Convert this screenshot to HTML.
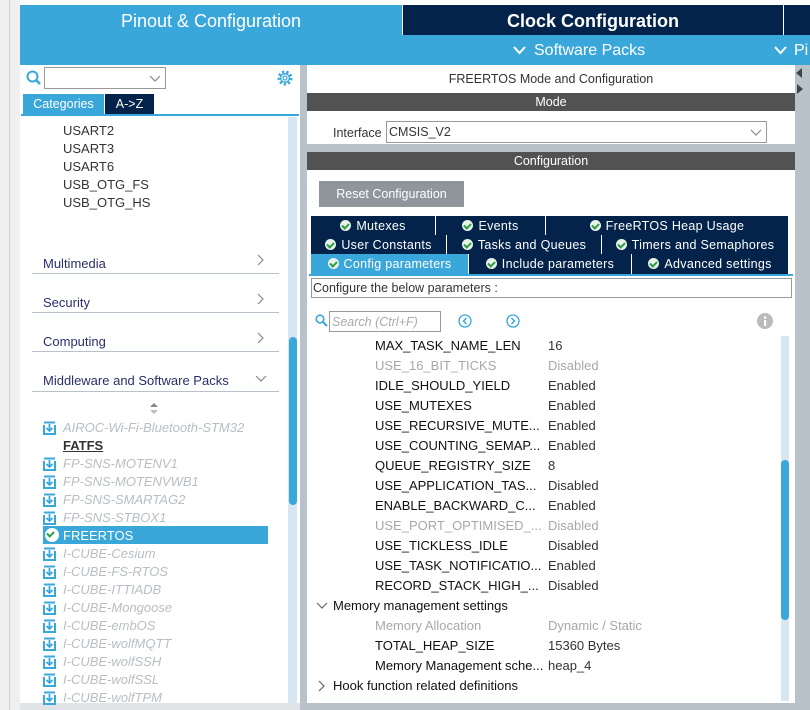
<!DOCTYPE html>
<html><head><meta charset="utf-8"><style>
*{margin:0;padding:0;box-sizing:border-box}
body{width:810px;height:710px;position:relative;overflow:hidden;background:#fff;font-family:"Liberation Sans",sans-serif;font-size:12px;color:#1a1a2e}
.a{position:absolute}
.ck{display:inline-block;width:11px;height:11px;border-radius:50%;background:#e8f3e8;position:relative;vertical-align:-1px;margin-right:5px}
.ck:after{content:"";position:absolute;left:3px;top:2px;width:3px;height:5px;border:solid #2f9a48;border-width:0 2px 2px 0;transform:rotate(45deg)}
.tab{position:absolute;height:19px;background:#03234b;color:#fff;text-align:center;line-height:20px;font-size:12.5px;border-right:1px solid #fff;letter-spacing:.3px}
.cat{position:absolute;left:43px;font-size:13px;color:#2b2f6b}
.sep{position:absolute;left:32px;width:247px;height:1px;background:#b8c2c8}
.pk{position:absolute;left:43px;font-size:13px;color:#b8bec4;font-style:italic;height:18px;line-height:19px;white-space:nowrap}
.pk svg{vertical-align:-3px;margin-right:7px}
.r{position:absolute;left:375px;font-size:13px;height:20px;line-height:21px;color:#111}
.v{position:absolute;left:548px;font-size:13px;height:20px;line-height:21px;color:#333}
.g{color:#a8a8a8}
</style></head><body>
<svg width="0" height="0" style="position:absolute"><defs><g id="dl"><path d="M1 4 V13 H12 V4" fill="none" stroke="#3aa7db" stroke-width="2"/><path d="M1 1.5 H12" stroke="#3aa7db" stroke-width="2"/><path d="M6.5 3 V10 M3.5 7 L6.5 10 L9.5 7" fill="none" stroke="#3aa7db" stroke-width="1.8"/></g><path id="rc" d="M1 1 L6 6 L1 11" fill="none" stroke="#888" stroke-width="1.2"/><path id="dc" d="M1 1 L6 6 L11 1" fill="none" stroke="#888" stroke-width="1.2"/></defs></svg>
<div class="a" style="left:0;top:0;width:20px;height:710px;background:#f0f0f0"></div>
<div class="a" style="left:9px;top:0;width:1px;height:710px;background:#d0d0d0"></div>
<div class="a" style="left:20px;top:5px;width:790px;height:60px;background:#3aa7db"></div>
<div class="a" style="left:20px;top:5px;width:382px;height:30px;color:#fff;font-size:18px;text-align:center;line-height:33px">Pinout &amp; Configuration</div>
<div class="a" style="left:403px;top:5px;width:380px;height:30px;background:#03234b;color:#fff;font-size:18px;text-align:center;line-height:33px;font-weight:bold">Clock Configuration</div>
<div class="a" style="left:784px;top:5px;width:26px;height:30px;background:#03234b"></div>
<div class="a" style="left:402px;top:5px;width:1px;height:30px;background:#fff"></div>
<div class="a" style="left:783px;top:5px;width:1px;height:30px;background:#fff"></div>
<svg class="a" style="left:513px;top:46px" width="13" height="9"><path d="M1 1 L6.5 7 L12 1" fill="none" stroke="#fff" stroke-width="2"/></svg>
<div class="a" style="left:534px;top:42px;color:#fff;font-size:16px">Software Packs</div>
<svg class="a" style="left:774px;top:46px" width="13" height="9"><path d="M1 1 L6.5 7 L12 1" fill="none" stroke="#fff" stroke-width="2"/></svg>
<div class="a" style="left:794px;top:42px;color:#fff;font-size:16px">Pi</div>
<svg class="a" style="left:26px;top:70px" width="16" height="16"><circle cx="6.5" cy="6.5" r="5" fill="none" stroke="#3aa7db" stroke-width="2"/><line x1="10" y1="10" x2="14" y2="14" stroke="#3aa7db" stroke-width="2.5"/></svg>
<div class="a" style="left:44px;top:67px;width:122px;height:22px;border:1px solid #999"></div>
<svg class="a" style="left:149px;top:75px" width="12" height="7"><use href="#dc"/></svg>
<svg class="a" style="left:276px;top:69px" width="18" height="18"><circle cx="9" cy="9" r="6" fill="none" stroke="#3aa7db" stroke-width="3" stroke-dasharray="2.2 2"/><circle cx="9" cy="9" r="4.3" fill="none" stroke="#3aa7db" stroke-width="1.3"/><circle cx="9" cy="9" r="2" fill="none" stroke="#3aa7db" stroke-width="1.2"/></svg>
<div class="a" style="left:23px;top:94px;width:81px;height:20px;background:#3aa7db;color:#fff;font-size:12.5px;text-align:center;line-height:21px">Categories</div>
<div class="a" style="left:105px;top:94px;width:49px;height:20px;background:#03234b;color:#fff;font-size:12.5px;text-align:center;line-height:21px">A-&gt;Z</div>
<div class="a" style="left:21px;top:114px;width:278px;height:2px;background:#3aa7db"></div>
<div class="a" style="left:288px;top:117px;width:9px;height:586px;background:#d6e6f3"></div>
<div class="a" style="left:289px;top:337px;width:8px;height:168px;background:#3aa7db;border-radius:4px"></div>
<div class="a" style="left:300px;top:65px;width:7px;height:645px;background:#b8c2c8"></div>
<div class="a" style="left:20px;top:703px;width:280px;height:7px;background:#e0e4e7"></div>
<div class="a" style="left:63px;top:122px;font-size:13px;color:#333;line-height:18px">USART2<br>USART3<br>USART6<br>USB_OTG_FS<br>USB_OTG_HS</div>
<div class="cat" style="top:256px">Multimedia</div><svg class="a" style="left:257px;top:254px" width="8" height="13"><use href="#rc"/></svg><div class="sep" style="top:273px"></div>
<div class="cat" style="top:295px">Security</div><svg class="a" style="left:257px;top:293px" width="8" height="13"><use href="#rc"/></svg><div class="sep" style="top:312px"></div>
<div class="cat" style="top:334px">Computing</div><svg class="a" style="left:257px;top:332px" width="8" height="13"><use href="#rc"/></svg><div class="sep" style="top:351px"></div>
<div class="cat" style="top:373px">Middleware and Software Packs</div><svg class="a" style="left:255px;top:375px" width="12" height="8"><use href="#dc"/></svg><div class="sep" style="top:391px"></div>
<svg class="a" style="left:150px;top:403px" width="8" height="12"><path d="M4 0 L8 4 H0 Z" fill="#888"/><path d="M0 7 H8 L4 11 Z" fill="#bbb"/></svg>
<div class="pk" style="top:418px"><svg width="13" height="14"><use href="#dl"/></svg>AIROC-Wi-Fi-Bluetooth-STM32</div>
<div class="a" style="left:63px;top:437px;font-size:13px;font-weight:bold;color:#333;text-decoration:underline;line-height:18px">FATFS</div>
<div class="pk" style="top:454px"><svg width="13" height="14"><use href="#dl"/></svg>FP-SNS-MOTENV1</div>
<div class="pk" style="top:472px"><svg width="13" height="14"><use href="#dl"/></svg>FP-SNS-MOTENVWB1</div>
<div class="pk" style="top:490px"><svg width="13" height="14"><use href="#dl"/></svg>FP-SNS-SMARTAG2</div>
<div class="pk" style="top:508px"><svg width="13" height="14"><use href="#dl"/></svg>FP-SNS-STBOX1</div>
<div class="a" style="left:43px;top:526px;width:225px;height:18px;background:#3aa7db;color:#fff;font-size:13px;line-height:19px;padding-left:2px"><span class="ck" style="width:14px;height:14px;background:#fff;margin-right:4px;vertical-align:-2px"></span>FREERTOS</div>
<div class="pk" style="top:544px"><svg width="13" height="14"><use href="#dl"/></svg>I-CUBE-Cesium</div>
<div class="pk" style="top:562px"><svg width="13" height="14"><use href="#dl"/></svg>I-CUBE-FS-RTOS</div>
<div class="pk" style="top:580px"><svg width="13" height="14"><use href="#dl"/></svg>I-CUBE-ITTIADB</div>
<div class="pk" style="top:598px"><svg width="13" height="14"><use href="#dl"/></svg>I-CUBE-Mongoose</div>
<div class="pk" style="top:616px"><svg width="13" height="14"><use href="#dl"/></svg>I-CUBE-embOS</div>
<div class="pk" style="top:634px"><svg width="13" height="14"><use href="#dl"/></svg>I-CUBE-wolfMQTT</div>
<div class="pk" style="top:652px"><svg width="13" height="14"><use href="#dl"/></svg>I-CUBE-wolfSSH</div>
<div class="pk" style="top:670px"><svg width="13" height="14"><use href="#dl"/></svg>I-CUBE-wolfSSL</div>
<div class="pk" style="top:688px"><svg width="13" height="14"><use href="#dl"/></svg>I-CUBE-wolfTPM</div>
<div class="a" style="left:795px;top:65px;width:15px;height:645px;background:#b8c2c8"></div>
<div class="a" style="left:307px;top:703px;width:488px;height:7px;background:#b8c2c8"></div>
<div class="a" style="left:307px;top:72px;width:488px;text-align:center;font-size:12.5px;color:#333">FREERTOS Mode and Configuration</div>
<div class="a" style="left:307px;top:93px;width:488px;height:18px;background:#525252;color:#fff;text-align:center;line-height:19px;font-size:12.5px">Mode</div>
<div class="a" style="left:333px;top:126px;font-size:12.5px;color:#333">Interface</div>
<div class="a" style="left:386px;top:121px;width:381px;height:22px;border:1px solid #999;font-size:12.5px;line-height:21px;padding-left:2px;color:#333">CMSIS_V2</div>
<svg class="a" style="left:750px;top:129px" width="12" height="7"><use href="#dc"/></svg>
<div class="a" style="left:307px;top:144px;width:488px;height:8px;background:#b8c2c8"></div>
<div class="a" style="left:307px;top:152px;width:488px;height:18px;background:#525252;color:#fff;text-align:center;line-height:19px;font-size:12.5px">Configuration</div>
<div class="a" style="left:319px;top:181px;width:145px;height:26px;background:#8e959b;color:#fff;text-align:center;line-height:27px;font-size:12.5px">Reset Configuration</div>
<div class="tab" style="left:311px;top:216px;width:125px"><span class="ck"></span>Mutexes</div>
<div class="tab" style="left:436px;top:216px;width:110px"><span class="ck"></span>Events</div>
<div class="tab" style="left:546px;top:216px;width:243px"><span class="ck"></span>FreeRTOS Heap Usage</div>
<div class="tab" style="left:311px;top:235px;width:136px"><span class="ck"></span>User Constants</div>
<div class="tab" style="left:447px;top:235px;width:155px"><span class="ck"></span>Tasks and Queues</div>
<div class="tab" style="left:602px;top:235px;width:187px"><span class="ck"></span>Timers and Semaphores</div>
<div class="tab" style="left:311px;top:254px;width:158px;background:#3aa7db;height:20px"><span class="ck"></span>Config parameters</div>
<div class="tab" style="left:469px;top:254px;width:163px;height:20px"><span class="ck"></span>Include parameters</div>
<div class="tab" style="left:632px;top:254px;width:157px;height:20px"><span class="ck"></span>Advanced settings</div>
<div class="a" style="left:309px;top:274px;width:484px;height:2px;background:#3aa7db"></div>
<div class="a" style="left:311px;top:278px;width:481px;height:20px;border:1px solid #999;font-size:12.5px;line-height:19px;padding-left:1px;color:#333">Configure the below parameters :</div>
<svg class="a" style="left:315px;top:314px" width="13" height="13"><circle cx="5" cy="5" r="3.8" fill="none" stroke="#3aa7db" stroke-width="1.6"/><line x1="8" y1="8" x2="12" y2="12" stroke="#3aa7db" stroke-width="2"/></svg>
<div class="a" style="left:329px;top:311px;width:112px;height:21px;border:1px solid #999;font-size:12.5px;font-style:italic;color:#aaa;line-height:20px;padding-left:2px">Search (Ctrl+F)</div>
<svg class="a" style="left:458px;top:314px" width="14" height="14"><circle cx="7" cy="7" r="6" fill="none" stroke="#3aa7db" stroke-width="1.3"/><path d="M8.5 4 L5.5 7 L8.5 10" fill="none" stroke="#3aa7db" stroke-width="1.5"/></svg>
<svg class="a" style="left:506px;top:314px" width="14" height="14"><circle cx="7" cy="7" r="6" fill="none" stroke="#3aa7db" stroke-width="1.3"/><path d="M5.5 4 L8.5 7 L5.5 10" fill="none" stroke="#3aa7db" stroke-width="1.5"/></svg>
<svg class="a" style="left:757px;top:313px" width="16" height="16"><circle cx="8" cy="8" r="8" fill="#bbb"/><rect x="7" y="7" width="2.2" height="6" fill="#fff"/><circle cx="8.1" cy="4.5" r="1.3" fill="#fff"/></svg>
<div class="a" style="left:781px;top:336px;width:8px;height:365px;background:#d6e6f3"></div>
<div class="a" style="left:781px;top:460px;width:8px;height:160px;background:#3aa7db;border-radius:4px"></div>
<div class="r" style="top:335px">MAX_TASK_NAME_LEN</div><div class="v" style="top:335px">16</div>
<div class="r g" style="top:355px">USE_16_BIT_TICKS</div><div class="v g" style="top:355px">Disabled</div>
<div class="r" style="top:375px">IDLE_SHOULD_YIELD</div><div class="v" style="top:375px">Enabled</div>
<div class="r" style="top:395px">USE_MUTEXES</div><div class="v" style="top:395px">Enabled</div>
<div class="r" style="top:415px">USE_RECURSIVE_MUTE...</div><div class="v" style="top:415px">Enabled</div>
<div class="r" style="top:435px">USE_COUNTING_SEMAP...</div><div class="v" style="top:435px">Enabled</div>
<div class="r" style="top:455px">QUEUE_REGISTRY_SIZE</div><div class="v" style="top:455px">8</div>
<div class="r" style="top:475px">USE_APPLICATION_TAS...</div><div class="v" style="top:475px">Disabled</div>
<div class="r" style="top:495px">ENABLE_BACKWARD_C...</div><div class="v" style="top:495px">Enabled</div>
<div class="r g" style="top:515px">USE_PORT_OPTIMISED_...</div><div class="v g" style="top:515px">Disabled</div>
<div class="r" style="top:535px">USE_TICKLESS_IDLE</div><div class="v" style="top:535px">Disabled</div>
<div class="r" style="top:555px">USE_TASK_NOTIFICATIO...</div><div class="v" style="top:555px">Enabled</div>
<div class="r" style="top:575px">RECORD_STACK_HIGH_...</div><div class="v" style="top:575px">Disabled</div>
<svg class="a" style="left:316px;top:602px" width="12" height="8"><path d="M1 1 L6 6 L11 1" fill="none" stroke="#666" stroke-width="1.2"/></svg>
<div class="r" style="left:333px;top:595px">Memory management settings</div>
<div class="r g" style="top:615px">Memory Allocation</div><div class="v g" style="top:615px">Dynamic / Static</div>
<div class="r" style="top:635px">TOTAL_HEAP_SIZE</div><div class="v" style="top:635px">15360 Bytes</div>
<div class="r" style="top:655px">Memory Management sche...</div><div class="v" style="top:655px">heap_4</div>
<svg class="a" style="left:318px;top:680px" width="8" height="13"><path d="M1 1 L6 6 L1 11" fill="none" stroke="#666" stroke-width="1.2"/></svg>
<div class="r" style="left:333px;top:675px">Hook function related definitions</div>
<div class="a" style="left:796px;top:68px;width:0;height:0;border-top:5px solid transparent;border-bottom:5px solid transparent;border-right:6px solid #444"></div>
<div class="a" style="left:797px;top:84px;width:0;height:0;border-top:5px solid transparent;border-bottom:5px solid transparent;border-left:6px solid #444"></div>
</body></html>
